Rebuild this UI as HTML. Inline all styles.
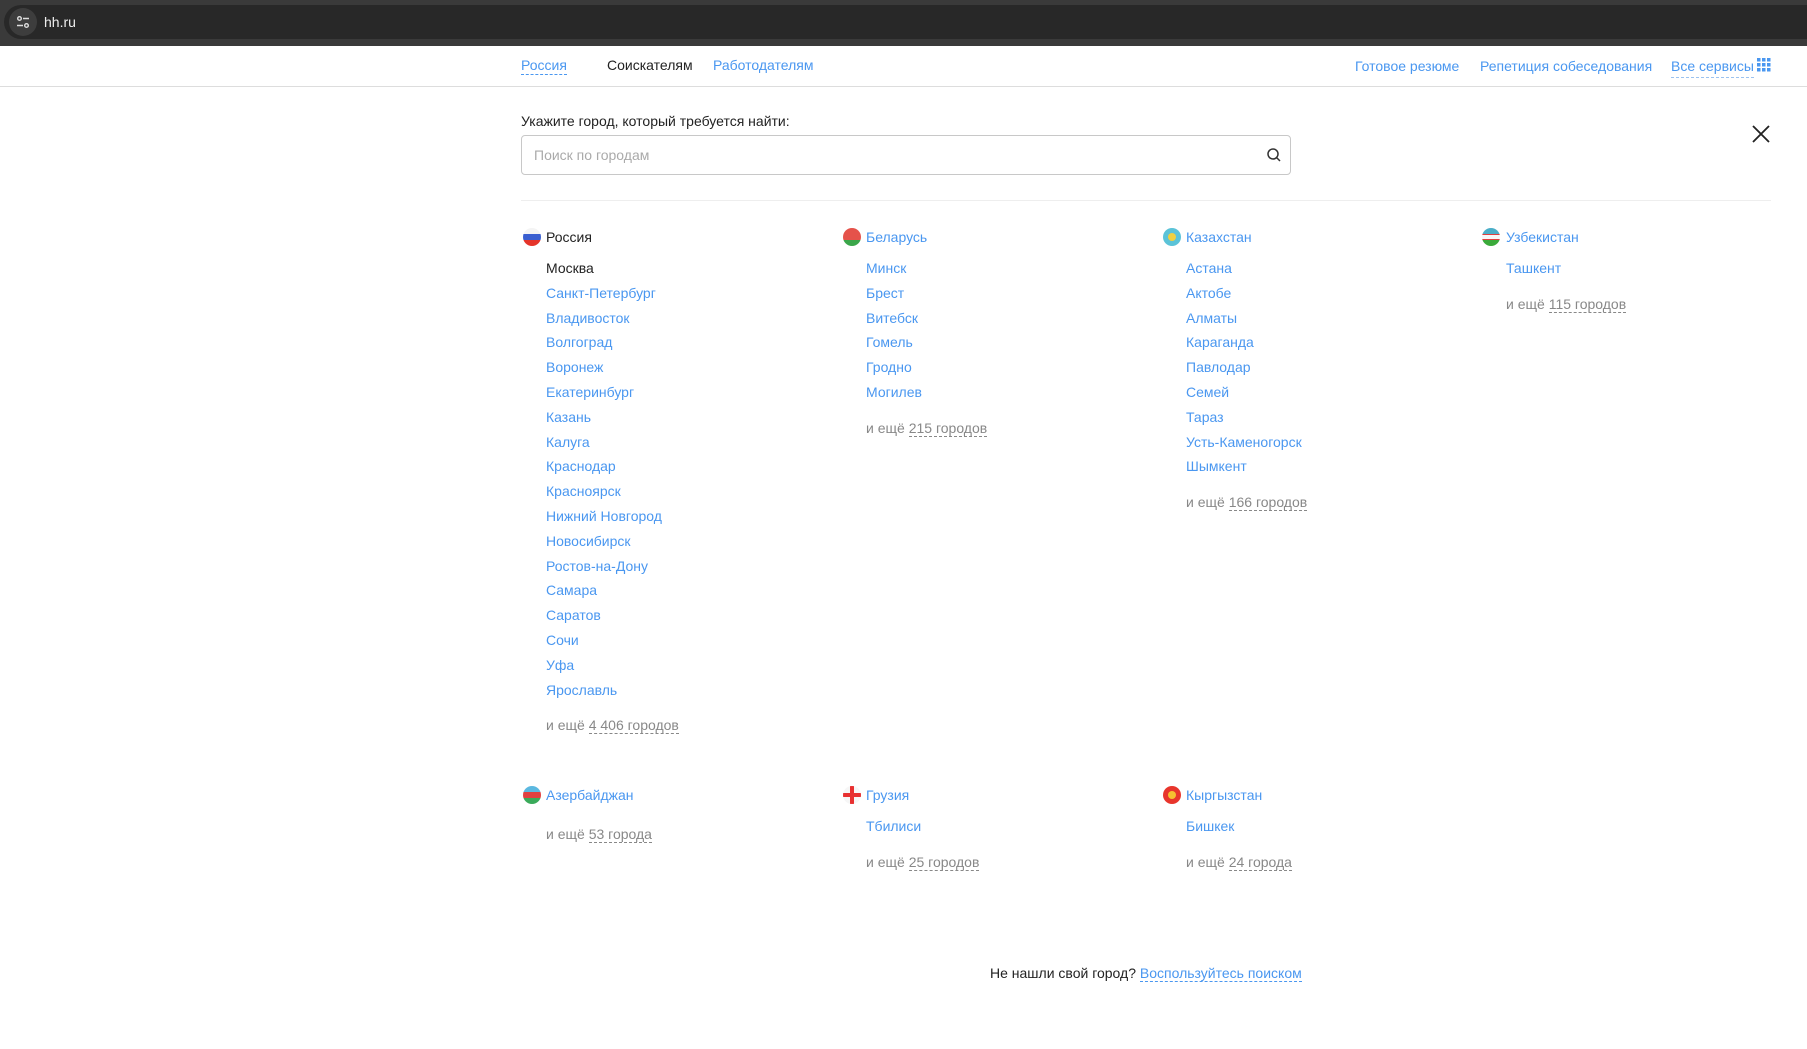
<!DOCTYPE html>
<html><head><meta charset="utf-8"><style>
*{margin:0;padding:0;box-sizing:border-box}
body{width:1807px;height:1049px;background:#fff;font-family:"Liberation Sans",Arial,sans-serif;font-size:14px;position:relative;overflow:hidden;color:#222}
.a{position:absolute;white-space:nowrap;line-height:18px}
.b{color:#4a97f0}
.g{color:#888}
.g u{text-decoration:none;border-bottom:1px dashed #888}
.f{position:absolute;width:18px;height:18px;border-radius:50%;overflow:hidden}
</style></head><body>
<div style="position:absolute;left:0;top:0;width:1807px;height:46px;background:#3a3a3a"></div>
<div style="position:absolute;left:4px;top:5px;width:1803px;height:34px;background:#282828;border-radius:17px 0 0 17px"></div>
<div style="position:absolute;left:9px;top:8px;width:28px;height:28px;border-radius:50%;background:#3d3d3d"></div>
<svg style="position:absolute;left:16px;top:15px" width="14" height="14" viewBox="0 0 14 14" fill="none" stroke="#ddd" stroke-width="1.4"><circle cx="3.5" cy="3.5" r="1.8"/><path d="M7 3.5h6M1 10.5h6"/><circle cx="10.5" cy="10.5" r="1.8"/></svg>
<div class="a" style="left:44px;top:13px;color:#eee;font-size:14px">hh.ru</div>
<div style="position:absolute;left:0;top:86px;width:1807px;height:1px;background:#ddd"></div>
<div class="a b" style="left:521px;top:56px;border-bottom:1px dashed #4a97f0">Россия</div>
<div class="a" style="left:607px;top:56px">Соискателям</div>
<div class="a b" style="left:713px;top:56px">Работодателям</div>
<div class="a b" style="left:1355px;top:57px">Готовое резюме</div>
<div class="a b" style="left:1480px;top:57px">Репетиция собеседования</div>
<div class="a b" style="left:1671px;top:57px;border-bottom:1px dashed #9cc3f0;padding-bottom:2px">Все сервисы</div>
<svg style="position:absolute;left:1757px;top:58px" width="14" height="14" viewBox="0 0 14 14" fill="#4a97f0"><rect x="0" y="0" width="3.5" height="3.5"/><rect x="5" y="0" width="3.5" height="3.5"/><rect x="10" y="0" width="3.5" height="3.5"/><rect x="0" y="5" width="3.5" height="3.5"/><rect x="5" y="5" width="3.5" height="3.5"/><rect x="10" y="5" width="3.5" height="3.5"/><rect x="0" y="10" width="3.5" height="3.5"/><rect x="5" y="10" width="3.5" height="3.5"/><rect x="10" y="10" width="3.5" height="3.5"/></svg>
<div class="a" style="left:521px;top:112px">Укажите город, который требуется найти:</div>
<div style="position:absolute;left:521px;top:135px;width:770px;height:40px;border:1px solid #c8c8c8;border-radius:4px"></div>
<div class="a" style="left:534px;top:146px;color:#aaa">Поиск по городам</div>
<svg style="position:absolute;left:1266px;top:147px" width="16" height="16" viewBox="0 0 16 16" fill="none" stroke="#333" stroke-width="1.5"><circle cx="7" cy="7" r="5"/><path d="M10.5 10.5l3.5 3.5"/></svg>
<svg style="position:absolute;left:1751px;top:124px" width="20" height="20" viewBox="0 0 20 20" stroke="#222" stroke-width="1.8"><path d="M2 2l16 16M18 2L2 18"/></svg>
<div style="position:absolute;left:521px;top:200px;width:1250px;height:1px;background:#eee"></div>

<div class="f" style="left:523px;top:228px;background:linear-gradient(#f4f4f4 33%,#3a5fd0 33%,#3a5fd0 66%,#e5342a 66%)"></div>
<div class="a" style="left:546px;top:228px">Россия</div>
<div class="a" style="left:546px;top:259px">Москва</div>
<div class="a b" style="left:546px;top:284px">Санкт-Петербург</div>
<div class="a b" style="left:546px;top:309px">Владивосток</div>
<div class="a b" style="left:546px;top:333px">Волгоград</div>
<div class="a b" style="left:546px;top:358px">Воронеж</div>
<div class="a b" style="left:546px;top:383px">Екатеринбург</div>
<div class="a b" style="left:546px;top:408px">Казань</div>
<div class="a b" style="left:546px;top:433px">Калуга</div>
<div class="a b" style="left:546px;top:457px">Краснодар</div>
<div class="a b" style="left:546px;top:482px">Красноярск</div>
<div class="a b" style="left:546px;top:507px">Нижний Новгород</div>
<div class="a b" style="left:546px;top:532px">Новосибирск</div>
<div class="a b" style="left:546px;top:557px">Ростов-на-Дону</div>
<div class="a b" style="left:546px;top:581px">Самара</div>
<div class="a b" style="left:546px;top:606px">Саратов</div>
<div class="a b" style="left:546px;top:631px">Сочи</div>
<div class="a b" style="left:546px;top:656px">Уфа</div>
<div class="a b" style="left:546px;top:681px">Ярославль</div>
<div class="a g" style="left:546px;top:716px">и ещё <u>4 406 городов</u></div>

<div class="f" style="left:843px;top:228px;background:linear-gradient(#e5524a 66%,#3aa64a 66%)"></div>
<div class="a b" style="left:866px;top:228px">Беларусь</div>
<div class="a b" style="left:866px;top:259px">Минск</div>
<div class="a b" style="left:866px;top:284px">Брест</div>
<div class="a b" style="left:866px;top:309px">Витебск</div>
<div class="a b" style="left:866px;top:333px">Гомель</div>
<div class="a b" style="left:866px;top:358px">Гродно</div>
<div class="a b" style="left:866px;top:383px">Могилев</div>
<div class="a g" style="left:866px;top:419px">и ещё <u>215 городов</u></div>

<div class="f" style="left:1163px;top:228px;background:#5bc3d8"><div style="position:absolute;left:5px;top:5px;width:8px;height:8px;border-radius:50%;background:#f0d040"></div></div>
<div class="a b" style="left:1186px;top:228px">Казахстан</div>
<div class="a b" style="left:1186px;top:259px">Астана</div>
<div class="a b" style="left:1186px;top:284px">Актобе</div>
<div class="a b" style="left:1186px;top:309px">Алматы</div>
<div class="a b" style="left:1186px;top:333px">Караганда</div>
<div class="a b" style="left:1186px;top:358px">Павлодар</div>
<div class="a b" style="left:1186px;top:383px">Семей</div>
<div class="a b" style="left:1186px;top:408px">Тараз</div>
<div class="a b" style="left:1186px;top:433px">Усть-Каменогорск</div>
<div class="a b" style="left:1186px;top:457px">Шымкент</div>
<div class="a g" style="left:1186px;top:493px">и ещё <u>166 городов</u></div>

<div class="f" style="left:1482px;top:228px;background:linear-gradient(#4aaec8 33%,#e04040 33%,#e04040 38%,#f8f8f8 38%,#f8f8f8 62%,#e04040 62%,#e04040 67%,#3aaa3a 67%)"></div>
<div class="a b" style="left:1506px;top:228px">Узбекистан</div>
<div class="a b" style="left:1506px;top:259px">Ташкент</div>
<div class="a g" style="left:1506px;top:295px">и ещё <u>115 городов</u></div>

<div class="f" style="left:523px;top:786px;background:linear-gradient(#5bb8e0 33%,#e04040 33%,#e04040 66%,#3aaa5a 66%)"></div>
<div class="a b" style="left:546px;top:786px">Азербайджан</div>
<div class="a g" style="left:546px;top:825px">и ещё <u>53 города</u></div>

<div class="f" style="left:843px;top:786px;background:#f6f6f6"><div style="position:absolute;left:7px;top:0;width:4px;height:18px;background:#e83030"></div><div style="position:absolute;left:0;top:7px;width:18px;height:4px;background:#e83030"></div></div>
<div class="a b" style="left:866px;top:786px">Грузия</div>
<div class="a b" style="left:866px;top:817px">Тбилиси</div>
<div class="a g" style="left:866px;top:853px">и ещё <u>25 городов</u></div>

<div class="f" style="left:1163px;top:786px;background:#e8352c"><div style="position:absolute;left:5px;top:5px;width:8px;height:8px;border-radius:50%;background:#f5c030"></div></div>
<div class="a b" style="left:1186px;top:786px">Кыргызстан</div>
<div class="a b" style="left:1186px;top:817px">Бишкек</div>
<div class="a g" style="left:1186px;top:853px">и ещё <u>24 города</u></div>

<div class="a" style="left:990px;top:964px">Не нашли свой город? <span class="b" style="border-bottom:1px dashed #4a97f0">Воспользуйтесь поиском</span></div>
</body></html>
